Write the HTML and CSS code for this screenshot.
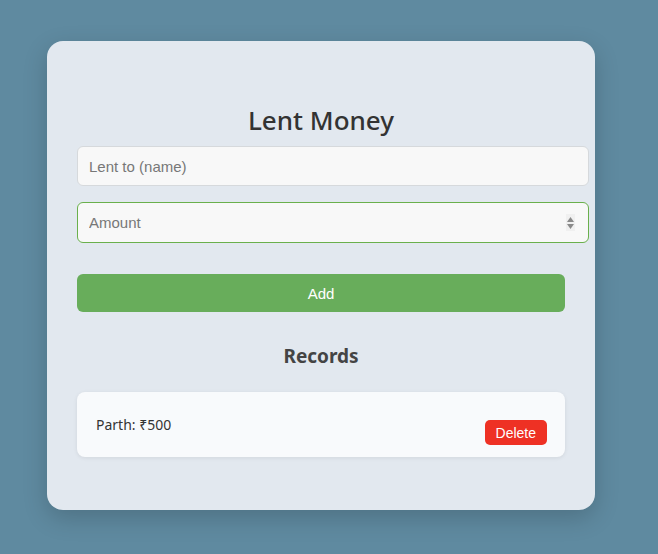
FILE: index.html
```html
<!DOCTYPE html>
<html>
<head>
<meta charset="utf-8">
<link rel="stylesheet" href="styles.css">
</head>
<body>
<div class="card">
  <h2 class="title">Lent Money</h2>
  <input class="field" type="text" placeholder="Lent to (name)">
  <div class="field-wrap">
    <input class="field field-focus" type="number" placeholder="Amount">
    <span class="spin"><svg width="9" height="16" viewBox="0 0 9 16"><path d="M4.5 2 L8 7 L1 7 Z" fill="#8a8a8a"/><path d="M1 9 L8 9 L4.5 14 Z" fill="#8a8a8a"/></svg></span>
  </div>
  <button class="add">Add</button>
  <h3 class="records">Records</h3>
  <ul class="list">
    <li class="item"><span class="item-text">Parth: ₹500</span><button class="del">Delete</button></li>
  </ul>
</div>
</body>
</html>
```
FILE: styles.css
```css
html, body { margin: 0; padding: 0; }
body {
  background: #5f8aa0;
  width: 658px;
  height: 554px;
  padding: 41px 0 0 47px;
  box-sizing: border-box;
  overflow: hidden;
}
.card {
  width: 548px;
  height: 469px;
  box-sizing: border-box;
  background: #e2e8ef;
  border-radius: 16px;
  padding: 0 30px;
  box-shadow: 0 8px 24px rgba(0,0,0,0.18);
}
.title {
  margin: 0 0 9px;
  padding-top: 62px;
  font-family: "Noto Sans", sans-serif;
  font-size: 26px;
  line-height: 34px;
  font-weight: 500;
  color: #333;
  text-align: center;
}
.field-wrap { position: relative; margin-top: 16px; }
.field {
  display: block;
  width: 512px;
  box-sizing: border-box;
  height: 40px;
  padding: 0 11px;
  border: 1px solid #d6d9dc;
  border-radius: 6px;
  background: #f8f8f8;
  font-family: "Liberation Sans", Arial, sans-serif;
  font-size: 15px;
  color: #333;
  outline: none;
}
.field::placeholder { color: #777; }
.field-focus { border-color: #6ab04c; height: 41px; }
.field-focus::-webkit-inner-spin-button, .field-focus::-webkit-outer-spin-button { -webkit-appearance: none; margin: 0; }
.spin {
  position: absolute;
  left: 489px;
  top: 12px;
  width: 9px;
  height: 17px;
  background: #f0f0f0;
  display: flex;
  align-items: center;
}
.add {
  display: block;
  width: 100%;
  height: 38px;
  margin-top: 31px;
  border: none;
  border-radius: 6px;
  background: #68ad5b;
  color: #fff;
  font-family: "Liberation Sans", Arial, sans-serif;
  font-size: 15px;
}
.records {
  margin: 31px 0 0;
  font-family: "Noto Sans", sans-serif;
  font-size: 19px;
  line-height: 26px;
  font-weight: 700;
  color: #444;
  text-align: center;
}
.list { list-style: none; margin: 23px 0 0; padding: 0; }
.item {
  display: flex;
  align-items: center;
  justify-content: space-between;
  height: 65px;
  box-sizing: border-box;
  padding: 0 18px 0 19px;
  background: #f8fafc;
  border-radius: 8px;
  box-shadow: 0 1px 4px rgba(0,0,0,0.08);
}
.item-text {
  font-family: "Noto Sans", sans-serif;
  font-size: 14px;
  color: #333;
  margin-top: -1px;
}
.del {
  height: 25px;
  padding: 0 11px;
  margin-top: 16px;
  border: none;
  border-radius: 5px;
  background: #ee3124;
  color: #fff;
  font-family: "Liberation Sans", Arial, sans-serif;
  font-size: 14px;
}
```
